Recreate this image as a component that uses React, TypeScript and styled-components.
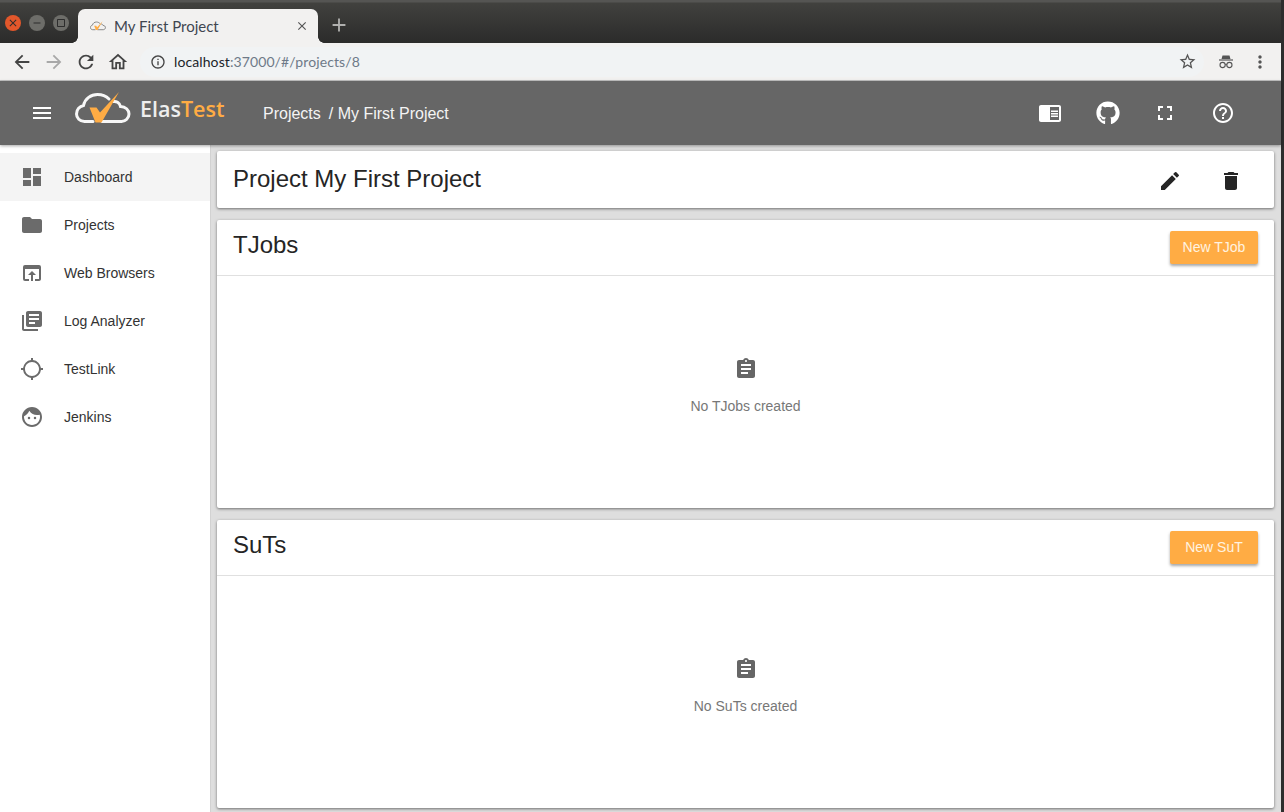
import React from 'react';
import styled, { createGlobalStyle } from 'styled-components';
import { FaGithub } from 'react-icons/fa';
import {
  MdAdd,
  MdArrowBack,
  MdArrowForward,
  MdAssignment,
  MdChromeReaderMode,
  MdClose,
  MdCropSquare,
  MdDashboard,
  MdDelete,
  MdEdit,
  MdFace,
  MdFolder,
  MdFullscreen,
  MdGpsNotFixed,
  MdHelpOutline,
  MdInfoOutline,
  MdLibraryBooks,
  MdMenu,
  MdMoreVert,
  MdOpenInBrowser,
  MdOutlineHome,
  MdRefresh,
  MdRemove,
  MdStarBorder,
} from 'react-icons/md';

const GlobalStyle = createGlobalStyle`
  html, body {
    margin: 0;
    padding: 0;
    background: #2d2d2d;
    overflow: hidden;
  }
  * {
    box-sizing: border-box;
  }
`;

const Screen = styled.div`
  display: flex;
  flex-direction: column;
  width: 1281px;
  height: 812px;
  background: #dedede;
  font-family: 'Liberation Sans', Arial, sans-serif;
`;

const TabStrip = styled.div`
  display: flex;
  flex: none;
  align-items: flex-end;
  height: 43px;
  padding-left: 5px;
  background: linear-gradient(#555553 0, #555553 2px, #41413e 3px, #2b2b2a 100%);
`;

const WindowButtons = styled.div`
  display: flex;
  gap: 8px;
  align-self: flex-start;
  margin-top: 15px;
`;

const WindowButton = styled.span<{ $color: string }>`
  display: flex;
  align-items: center;
  justify-content: center;
  width: 16px;
  height: 16px;
  border-radius: 50%;
  background: ${(props) => props.$color};
  color: #2d2d2d;
  font-size: 12px;
`;

const Tab = styled.div`
  display: flex;
  position: relative;
  align-items: center;
  width: 240px;
  height: 34px;
  margin-left: 9px;
  padding: 0 9px 0 12px;
  border-radius: 7px 7px 0 0;
  background: #f2f1f0;
  color: #3f4650;
  font-family: Lato, 'Noto Sans', sans-serif;
  font-size: 15px;

  &::before,
  &::after {
    content: '';
    position: absolute;
    bottom: 0;
    width: 6px;
    height: 6px;
  }

  &::before {
    left: -6px;
    background: radial-gradient(circle at 0 0, transparent 5.5px, #f2f1f0 6px);
  }

  &::after {
    right: -6px;
    background: radial-gradient(circle at 100% 0, transparent 5.5px, #f2f1f0 6px);
  }
`;

const TabTitle = styled.span`
  flex: 1;
  margin-left: 8px;
`;

const NewTab = styled.span`
  display: flex;
  margin: 0 0 7px 10px;
  color: #b0b0ae;
  font-size: 22px;
`;

const Toolbar = styled.div`
  display: flex;
  flex: none;
  align-items: center;
  height: 38px;
  padding: 0 11px;
  border-bottom: 1px solid #c4c4c4;
  background: #f2f1f0;
  color: #4a4a4a;
  font-size: 22px;
`;

const NavIcon = styled.span<{ $muted?: boolean }>`
  display: flex;
  width: 32px;
  color: ${(props) => (props.$muted ? '#a8a8a8' : '#444')};
`;

const AddressBar = styled.div`
  display: flex;
  flex: 1;
  align-items: center;
  height: 30px;
  margin: 0 14px 0 1px;
  padding: 0 7px 0 10px;
  border-radius: 15px;
  background: #f1f3f4;
  font-family: Lato, 'Noto Sans', sans-serif;
  font-size: 14px;
  letter-spacing: 0.1px;
`;

const Host = styled.span`
  margin-left: 8px;
  color: #20242a;
`;

const UrlRest = styled.span`
  flex: 1;
  color: #6e7a88;
`;

const Header = styled.header`
  display: flex;
  position: relative;
  z-index: 2;
  flex: none;
  align-items: center;
  height: 64px;
  padding: 0 46px 0 30px;
  background: #666;
  box-shadow: 0 1px 3px rgba(0, 0, 0, 0.35);
  color: #fff;
`;

const MenuIcon = styled.span`
  display: flex;
  font-size: 24px;
`;

const Logo = styled.div`
  display: flex;
  align-items: center;
  gap: 9px;
  width: 188px;
  margin: 0 0 9px 21px;
  font-family: 'Open Sans', sans-serif;
  font-size: 21.5px;
  font-weight: 600;
  line-height: 1;
`;

const LogoText = styled.span`
  color: #eee;
`;

const LogoAccent = styled.span`
  color: #ffac44;
`;

const Breadcrumb = styled.div`
  flex: 1;
  padding-top: 2px;
  color: #f4f4f4;
  font-size: 16px;
`;

const Crumb = styled.span`
  margin-right: 8px;
`;

const HeaderActions = styled.div`
  display: flex;
  gap: 33.7px;
  align-items: center;
  font-size: 24px;
`;

const HeaderIcon = styled.span`
  display: flex;
`;

const Body = styled.div`
  display: flex;
  flex: 1;
  min-height: 0;
`;

const Sidebar = styled.nav`
  flex: none;
  width: 211px;
  padding-top: 8px;
  border-right: 1px solid #d2d2d2;
  background: #fff;
`;

const NavItem = styled.div<{ $active?: boolean }>`
  display: flex;
  align-items: center;
  height: 48px;
  padding-left: 20px;
  background: ${(props) => (props.$active ? '#f4f4f4' : 'transparent')};
  color: #333;
  font-size: 14px;
`;

const NavGlyph = styled.span`
  display: flex;
  width: 44px;
  color: #6b6b6b;
  font-size: 24px;
`;

const Main = styled.main`
  display: flex;
  flex: 1;
  flex-direction: column;
  gap: 12px;
  padding: 6px 7px 4px 6px;
`;

const Card = styled.section<{ $grow?: boolean }>`
  display: flex;
  flex: ${(props) => (props.$grow ? '1' : 'none')};
  flex-direction: column;
  border-radius: 2px;
  background: #fff;
  box-shadow: 0 1px 3px rgba(0, 0, 0, 0.5);
`;

const TitleRow = styled.div`
  display: flex;
  align-items: center;
  justify-content: space-between;
  height: 57px;
  padding: 0 31px 0 16px;
`;

const ProjectTitle = styled.h1`
  margin: 0 0 2px;
  color: #252525;
  font-size: 24px;
  font-weight: 400;
`;

const CardActions = styled.div`
  display: flex;
  gap: 37px;
  padding-top: 2px;
  color: #252525;
  font-size: 24px;
`;

const CardActionIcon = styled.span`
  display: flex;
`;

const CardHead = styled.div`
  display: flex;
  flex: none;
  align-items: flex-start;
  justify-content: space-between;
  height: 56px;
  padding: 11px 16px 0;
  border-bottom: 1px solid #e0e0e0;
`;

const CardTitle = styled.h2`
  margin: 0;
  color: #252525;
  font-size: 24px;
  font-weight: 400;
  line-height: 28px;
`;

const NewButton = styled.button`
  width: 88px;
  height: 33px;
  padding: 0 0 2px;
  border: 0;
  border-radius: 2px;
  background: #ffac44;
  box-shadow: 0 2px 3px rgba(0, 0, 0, 0.35);
  color: #fff3e0;
  font-family: inherit;
  font-size: 14px;
`;

const EmptyState = styled.div`
  display: flex;
  flex: 1;
  flex-direction: column;
  align-items: center;
  padding-top: 81px;
  color: #777;
  font-size: 14px;
`;

const EmptyIcon = styled.span`
  display: flex;
  margin-bottom: 17px;
  color: #666;
  font-size: 24px;
`;

const navItems = [
  { label: 'Dashboard', icon: <MdDashboard />, active: true },
  { label: 'Projects', icon: <MdFolder /> },
  { label: 'Web Browsers', icon: <MdOpenInBrowser /> },
  { label: 'Log Analyzer', icon: <MdLibraryBooks /> },
  { label: 'TestLink', icon: <MdGpsNotFixed /> },
  { label: 'Jenkins', icon: <MdFace /> },
];

interface LogoMarkProps {
  width: number;
  height: number;
  cloud: string;
}

const LogoMark: React.FC<LogoMarkProps> = function ({ width, height, cloud }) {
  return (
    <svg width={width} height={height} viewBox="0 0 56 33" fill="none">
      <path
        d="M18 29.5H9.5C4.8 29.5 1.5 26 1.5 22C1.5 17.5 4.8 14.3 8.5 13.5C10 6.5 16 2.5 22.5 2.5C27 2.5 31 4 34 7M38.5 9.5C41 9 44.5 10.5 45.5 14.5C50.5 14.5 54 18 54 22C54 26 50.5 29.5 46.5 29.5H27"
        stroke={cloud}
        strokeWidth="3"
        strokeLinecap="round"
      />
      <path d="M14.5 15.5H21.5L25 20.5L44 0L26.5 30.5H20.5Z" fill="#ffac44" />
    </svg>
  );
};

const IncognitoIcon: React.FC = function () {
  return (
    <svg width="16" height="16" viewBox="0 0 16 16" fill="none">
      <path d="M4.5 1.5H11.5L12.5 5H3.5Z" fill="#555" />
      <path d="M1 6H15" stroke="#555" strokeWidth="1.2" />
      <circle cx="4.6" cy="11" r="2.6" stroke="#555" strokeWidth="1.1" />
      <circle cx="11.4" cy="11" r="2.6" stroke="#555" strokeWidth="1.1" />
      <path d="M7.2 10.6H8.8" stroke="#555" strokeWidth="1" />
    </svg>
  );
};

const App: React.FC = function () {
  return (
    <Screen>
      <GlobalStyle />
      <TabStrip>
        <WindowButtons>
          <WindowButton $color="#e2572b">
            <MdClose />
          </WindowButton>
          <WindowButton $color="#6d6d69">
            <MdRemove />
          </WindowButton>
          <WindowButton $color="#6d6d69">
            <MdCropSquare />
          </WindowButton>
        </WindowButtons>
        <Tab>
          <LogoMark width={16} height={10} cloud="#777" />
          <TabTitle>My First Project</TabTitle>
          <MdClose size={14} color="#555" />
        </Tab>
        <NewTab>
          <MdAdd />
        </NewTab>
      </TabStrip>
      <Toolbar>
        <NavIcon>
          <MdArrowBack />
        </NavIcon>
        <NavIcon $muted>
          <MdArrowForward />
        </NavIcon>
        <NavIcon>
          <MdRefresh />
        </NavIcon>
        <NavIcon>
          <MdOutlineHome />
        </NavIcon>
        <AddressBar>
          <MdInfoOutline size={16} color="#444" />
          <Host>localhost</Host>
          <UrlRest>:37000/#/projects/8</UrlRest>
          <MdStarBorder size={19} color="#555" />
        </AddressBar>
        <NavIcon>
          <IncognitoIcon />
        </NavIcon>
        <MdMoreVert size={20} color="#555" />
      </Toolbar>
      <Header>
        <MenuIcon>
          <MdMenu />
        </MenuIcon>
        <Logo>
          <LogoMark width={56} height={33} cloud="#f7f7f7" />
          <LogoText>
            Elas<LogoAccent>Test</LogoAccent>
          </LogoText>
        </Logo>
        <Breadcrumb>
          <Crumb>Projects</Crumb>/ My First Project
        </Breadcrumb>
        <HeaderActions>
          <HeaderIcon>
            <MdChromeReaderMode />
          </HeaderIcon>
          <HeaderIcon>
            <FaGithub />
          </HeaderIcon>
          <HeaderIcon>
            <MdFullscreen />
          </HeaderIcon>
          <HeaderIcon>
            <MdHelpOutline />
          </HeaderIcon>
        </HeaderActions>
      </Header>
      <Body>
        <Sidebar>
          {navItems.map((item) => (
            <NavItem key={item.label} $active={item.active}>
              <NavGlyph>{item.icon}</NavGlyph>
              {item.label}
            </NavItem>
          ))}
        </Sidebar>
        <Main>
          <Card>
            <TitleRow>
              <ProjectTitle>Project My First Project</ProjectTitle>
              <CardActions>
                <CardActionIcon>
                  <MdEdit />
                </CardActionIcon>
                <CardActionIcon>
                  <MdDelete />
                </CardActionIcon>
              </CardActions>
            </TitleRow>
          </Card>
          <Card $grow>
            <CardHead>
              <CardTitle>TJobs</CardTitle>
              <NewButton>New TJob</NewButton>
            </CardHead>
            <EmptyState>
              <EmptyIcon>
                <MdAssignment />
              </EmptyIcon>
              No TJobs created
            </EmptyState>
          </Card>
          <Card $grow>
            <CardHead>
              <CardTitle>SuTs</CardTitle>
              <NewButton>New SuT</NewButton>
            </CardHead>
            <EmptyState>
              <EmptyIcon>
                <MdAssignment />
              </EmptyIcon>
              No SuTs created
            </EmptyState>
          </Card>
        </Main>
      </Body>
    </Screen>
  );
};

export default App;
